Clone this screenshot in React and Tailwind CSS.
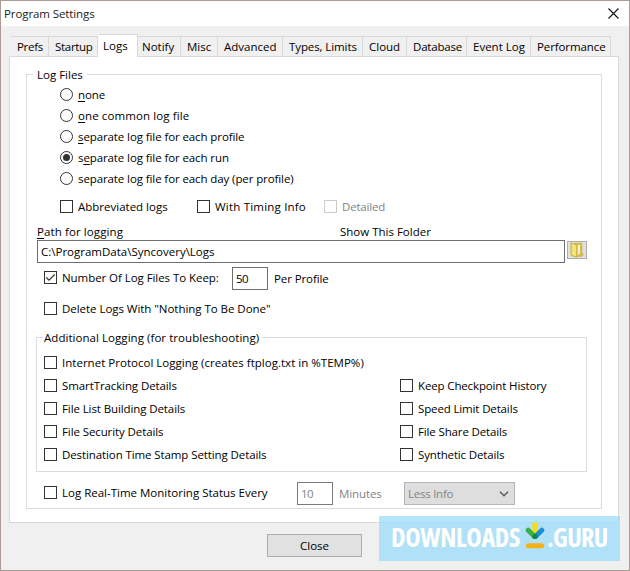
import clsx from 'clsx'

const tabs = [
  { name: 'Prefs', box: 'w-[38px]', text: 'pl-[6px] tracking-[-0.3px]' },
  { name: 'Startup', box: 'w-[49px]', text: 'pl-[6px] tracking-[-0.3px]' },
  { name: 'Logs', box: 'w-[40px]', text: 'pl-[5px]' },
  { name: 'Notify', box: 'w-[43px]', text: 'pl-[4px]' },
  { name: 'Misc', box: 'w-[37px]', text: 'pl-[6px]' },
  { name: 'Advanced', box: 'w-[65px]', text: 'pl-[6px]' },
  { name: 'Types, Limits', box: 'w-[80px]', text: 'pl-[6px] tracking-[-0.1px]' },
  { name: 'Cloud', box: 'w-[44px]', text: 'pl-[6px]' },
  { name: 'Database', box: 'w-[60px]', text: 'pl-[6px] tracking-[-0.2px]' },
  { name: 'Event Log', box: 'w-[64px]', text: 'pl-[6px]' },
  { name: 'Performance', box: 'w-[80px]', text: 'pl-[6px] tracking-[-0.1px]' },
]

const modes = [
  { key: 'n', rest: 'one' },
  { key: 'o', rest: 'ne common log file', wide: true },
  { key: 's', rest: 'eparate log file for each profile' },
  { pre: 's', key: 'e', rest: 'parate log file for each run', checked: true },
  { rest: 'separate log file for each day (per profile)' },
]

const leftDetails = [
  'SmartTracking Details',
  'File List Building Details',
  'File Security Details',
  'Destination Time Stamp Setting Details',
]

const rightDetails = [
  'Keep Checkpoint History',
  'Speed Limit Details',
  'File Share Details',
  'Synthetic Details',
]

function Radio({ checked }) {
  return (
    <span className="w-[13px] h-[13px] shrink-0 rounded-full border border-[#333] bg-white flex items-center justify-center">
      {checked && <span className="w-[7px] h-[7px] rounded-full bg-[#333]" />}
    </span>
  )
}

function Check({ label, checked, disabled, className }) {
  return (
    <label className={clsx('flex items-center h-[15px]', disabled && 'text-[#838383]', className)}>
      <span
        className={clsx(
          'w-[13px] h-[13px] shrink-0 border bg-white flex items-center justify-center',
          disabled ? 'border-[#ccc]' : 'border-[#333]'
        )}
      >
        {checked && (
          <svg width="11" height="11" viewBox="0 0 11 11" fill="none" stroke="#333" strokeWidth="1.2">
            <path d="M1.3 5.5 4 8.2 9.7 2.5" />
          </svg>
        )}
      </span>
      <span className="ml-[5px]">{label}</span>
    </label>
  )
}

function TitleBar() {
  return (
    <div className="h-[25px] shrink-0 bg-white flex items-center justify-between pl-[3px] pr-[10px]">
      <span className="text-[#222] tracking-[-0.1px]">Program Settings</span>
      <svg width="11" height="11" viewBox="0 0 11 11" stroke="#111" strokeWidth="1.1">
        <path d="M.5 .5 10.5 10.5M10.5 .5 .5 10.5" />
      </svg>
    </div>
  )
}

function TabStrip() {
  return (
    <div className="h-[30px] shrink-0 flex items-end pl-[2px]">
      {tabs.map((t) => {
        const active = t.name === 'Logs'
        return (
          <div
            key={t.name}
            className={clsx(
              'flex items-center border-t border-r border-[#d9d9d9]',
              t.box,
              t.text,
              active ? 'h-[23px] -mb-px bg-white pb-[2px] z-10' : 'h-[20px] pb-px'
            )}
          >
            {t.name}
          </div>
        )
      })}
    </div>
  )
}

function FolderButton() {
  return (
    <button className="ml-[2px] mt-[1px] w-[20px] h-[18px] border border-[#adadad] bg-[#e1e1e1] flex items-center justify-center">
      <svg width="14" height="16" viewBox="0 0 14 16">
        <path d="M5 1.2h6.8v9.6l1.4 1.6-1.2 1.8H6z" fill="#d9c24a" stroke="#c3a93a" strokeWidth=".8" />
        <path d="M7.4 3.4 10 2.8v8.4l-2.6 2.6z" fill="#f4efe0" />
        <path d="M1 .8 6.8 3v12.2L1 13.2z" fill="#f4e27a" stroke="#c3a52a" strokeWidth=".9" />
      </svg>
    </button>
  )
}

function Watermark() {
  return (
    <div className="absolute left-[378px] top-[515px] w-[241px] h-[45px] bg-[#9cdcf9]/75 z-20 flex items-center pl-[12px] text-white text-[26px] leading-[43px] font-bold">
      <span className="w-[130px] pb-[2px] font-stretch-condensed tracking-[-0.3px]">DOWNLOADS</span>
      <svg className="ml-[4px] mr-[2px] -mt-[7px] shrink-0" width="20" height="28" viewBox="0 0 20 28" fill="none" strokeLinecap="round">
        <path d="M10 4v9" stroke="#f5dc1e" strokeWidth="5.5" />
        <path d="M3.2 9.2 9 15" stroke="#35b04a" strokeWidth="5" />
        <path d="M16.8 9.2 11 15" stroke="#1b8fd6" strokeWidth="5" />
        <circle cx="10" cy="15.5" r="2.6" fill="#15834a" />
        <path d="M3.3 24.8h13.4" stroke="#f5b11a" strokeWidth="5" />
      </svg>
      <span className="pb-[2px] font-stretch-condensed tracking-[-0.7px]">.GURU</span>
    </div>
  )
}

export default function App() {
  return (
    <div className="relative w-[630px] h-[571px] flex flex-col border border-[#a89c94] bg-[#f0f0f0] overflow-hidden font-['Open_Sans',sans-serif] text-[11.5px] leading-[15px] text-black whitespace-nowrap">
      <TitleBar />
      <div className="pl-[8px] flex flex-col">
        <TabStrip />
        <div className="w-[610px] h-[467px] border border-[#d9d9d9] bg-white pl-[16px] pt-[17px]">
          <div className="w-[576px] h-[435px] border border-[#dcdcdc] flex flex-col">
            <div className="self-start ml-[6px] -mt-[8px] h-[15px] px-[4px] bg-white">Log Files</div>
            <div className="mt-[2px] pl-[33px]">
              {modes.map((m) => (
                <label key={m.rest} className="h-[21px] flex items-center">
                  <Radio checked={m.checked} />
                  <span className={clsx('ml-[5px]', m.wide ? 'tracking-[0.1px]' : 'tracking-[-0.1px]')}>
                    {m.pre}
                    <u className="underline-offset-2">{m.key}</u>
                    {m.rest}
                  </span>
                </label>
              ))}
            </div>
            <div className="mt-[10px] pl-[33px] flex">
              <Check label="Abbreviated logs" className="w-[137px]" />
              <Check label="With Timing Info" className="w-[127px] tracking-[0.2px]" />
              <Check label="Detailed" disabled className="tracking-[-0.2px]" />
            </div>
            <div className="mt-[9px] h-[17px] pl-[10px] flex items-center">
              <span className="w-[303px] tracking-[0.1px]">
                <u className="underline-offset-2">P</u>ath for logging
              </span>
              <span>Show This Folder</span>
            </div>
            <div className="pl-[10px] flex">
              <div className="w-[528px] h-[23px] border border-[#6e6e6e] flex items-center pl-[3px]">
                C:\ProgramData\Syncovery\Logs
              </div>
              <FolderButton />
            </div>
            <div className="mt-[4px] h-[23px] pl-[17px] flex items-center">
              <Check label="Number Of Log Files To Keep:" checked className="w-[188px] -mt-[2px] tracking-[-0.06px]" />
              <div className="w-[36px] h-[23px] border border-[#6e6e6e] flex items-center pl-[3px] tracking-[-0.5px]">50</div>
              <span className="ml-[6px] tracking-[-0.1px]">Per Profile</span>
            </div>
            <Check label={'Delete Logs With "Nothing To Be Done"'} className="mt-[11px] ml-[17px] tracking-[-0.04px]" />

            <div className="mt-[21px] ml-[9px] w-[551px] h-[135px] border border-[#dcdcdc] flex flex-col">
              <div className="self-start ml-[6px] -mt-[8px] h-[15px] pl-[1px] pr-[3px] bg-white tracking-[0.05px]">
                Additional Logging (for troubleshooting)
              </div>
              <Check
                label="Internet Protocol Logging (creates ftplog.txt in %TEMP%)"
                className="mt-[10px] ml-[7px] tracking-[0.02px]"
              />
              <div className="mt-[8px] ml-[7px] flex">
                <div className="w-[356px] flex flex-col gap-[8px] tracking-[-0.1px]">
                  {leftDetails.map((d) => (
                    <Check key={d} label={d} />
                  ))}
                </div>
                <div className="flex flex-col gap-[8px] tracking-[-0.14px]">
                  {rightDetails.map((d) => (
                    <Check key={d} label={d} />
                  ))}
                </div>
              </div>
            </div>

            <div className="mt-[10px] h-[23px] pl-[17px] flex items-center text-[#838383]">
              <Check label="Log Real-Time Monitoring Status Every" className="w-[253px] -mt-[2px] text-black" />
              <div className="w-[36px] h-[23px] border border-[#7a7a7a] flex items-center pl-[3px] tracking-[-0.5px]">10</div>
              <span className="ml-[6px] w-[65px] tracking-[-0.1px]">Minutes</span>
              <div className="w-[111px] h-[23px] border border-[#b5b5b5] bg-[#dedede] flex items-center justify-between pl-[3px] pr-[5px]">
                <span className="tracking-[-0.25px]">Less Info</span>
                <svg width="10" height="6" viewBox="0 0 10 6" fill="none" stroke="#555" strokeWidth="1.3">
                  <path d="M1 .8 5 4.8 9 .8" />
                </svg>
              </div>
            </div>
          </div>
        </div>
        <button className="mt-[11px] ml-[258px] w-[95px] h-[23px] border border-[#adadad] bg-[#e1e1e1]">
          Close
        </button>
      </div>
      <Watermark />
    </div>
  )
}
